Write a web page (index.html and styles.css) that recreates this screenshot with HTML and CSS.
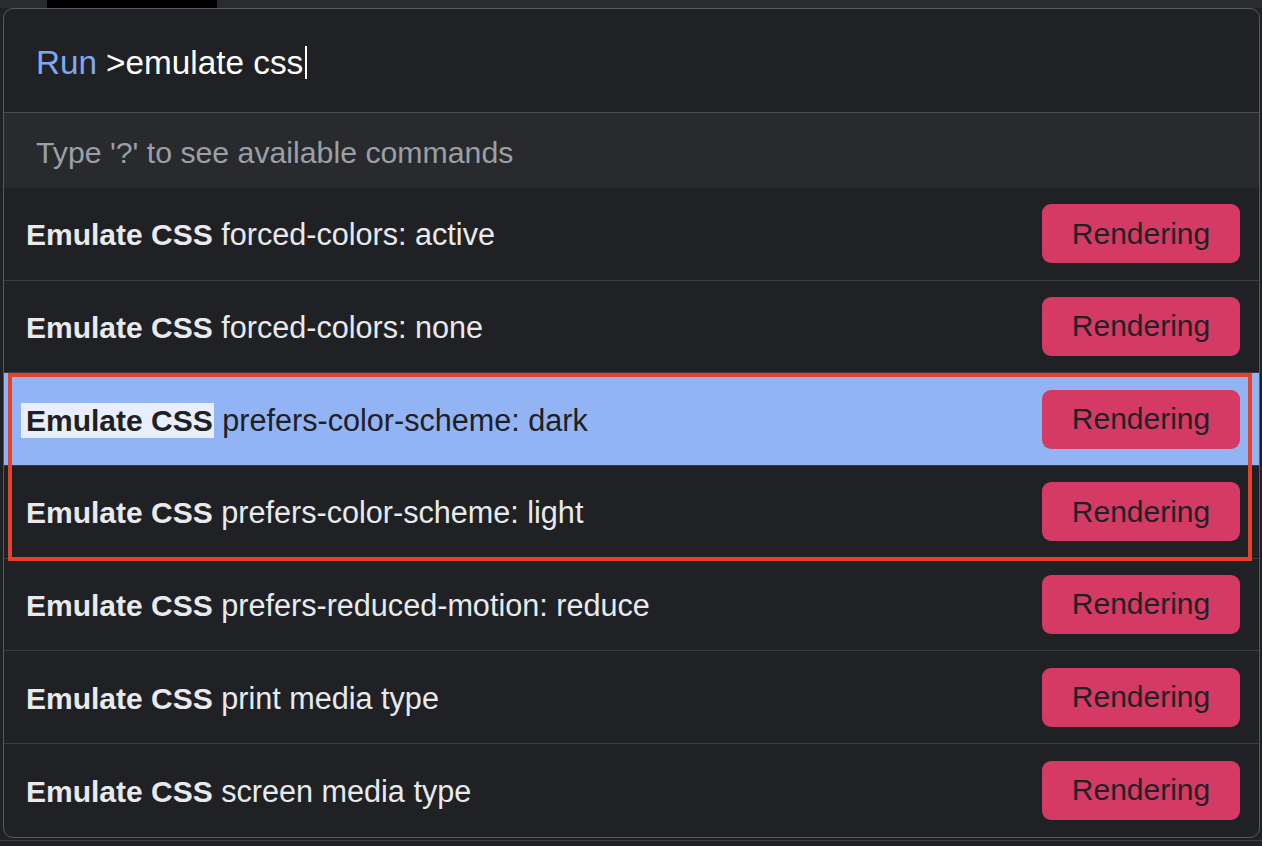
FILE: index.html
```html
<!DOCTYPE html>
<html lang="en">
<head>
<meta charset="utf-8">
<title>Command Menu</title>
<link rel="stylesheet" href="styles.css">
</head>
<body>
  <div class="topstrip"><div class="topstrip-tab"></div></div>
  <div class="panel">
    <div class="input-row">
      <span class="prompt">Run</span>
      <span class="query">&gt;emulate css</span><span class="caret"></span>
    </div>
    <div class="hint">Type '?' to see available commands</div>
    <div class="list">
      <div class="row"><span class="label"><b>Emulate CSS</b> forced-colors: active</span><span class="badge">Rendering</span></div>
      <div class="row"><span class="label"><b>Emulate CSS</b> forced-colors: none</span><span class="badge">Rendering</span></div>
      <div class="row selected"><span class="label"><b class="mark">Emulate CSS</b> prefers-color-scheme: dark</span><span class="badge">Rendering</span></div>
      <div class="row"><span class="label"><b>Emulate CSS</b> prefers-color-scheme: light</span><span class="badge">Rendering</span></div>
      <div class="row"><span class="label"><b>Emulate CSS</b> prefers-reduced-motion: reduce</span><span class="badge">Rendering</span></div>
      <div class="row"><span class="label"><b>Emulate CSS</b> print media type</span><span class="badge">Rendering</span></div>
      <div class="row last"><span class="label"><b>Emulate CSS</b> screen media type</span><span class="badge">Rendering</span></div>
    </div>
  </div>
  <div class="bottomstrip"></div>
  <div class="annotation"></div>
</body>
</html>
```

FILE: styles.css
```css
html, body {
  margin: 0;
  padding: 0;
}
body {
  width: 1262px;
  height: 846px;
  overflow: hidden;
  background: #202124;
  font-family: "Liberation Sans", Arial, Helvetica, sans-serif;
  position: relative;
}
.topstrip {
  height: 8px;
  background: #2a2b2e;
  display: flex;
}
.topstrip-tab {
  margin-left: 47px;
  width: 170px;
  height: 8px;
  background: #000;
}
.panel {
  margin-left: 3px;
  width: 1257px;
  box-sizing: border-box;
  border: 1px solid #55585c;
  border-radius: 10px;
  background: #202124;
  overflow: hidden;
}
.input-row {
  height: 104px;
  box-sizing: border-box;
  border-bottom: 1px solid #494b4f;
  display: flex;
  align-items: center;
  padding: 4px 0 0 32px;
  font-size: 33.3px;
  white-space: pre;
}
.prompt {
  color: #7fa8f0;
  margin-right: 9px;
}
.query {
  color: #ffffff;
}
.caret {
  display: inline-block;
  width: 2px;
  height: 33px;
  background: #ffffff;
  margin-left: 2px;
}
.hint {
  height: 75px;
  box-sizing: border-box;
  background: #292a2d;
  display: flex;
  align-items: center;
  padding: 4px 0 0 32px;
  font-size: 30.25px;
  color: #9aa0a6;
}
.row {
  height: 92.67px;
  box-sizing: border-box;
  border-bottom: 1px solid #3a3c40;
  display: flex;
  align-items: center;
  justify-content: space-between;
  padding: 0 19px 0 22px;
  font-size: 30px;
  color: #e8eaed;
}
.row.last {
  border-bottom: none;
}
.row.selected {
  background: #93b4f4;
  color: #1f2023;
}
.label {
  font-size: 30.6px;
  margin-top: 2px;
}
.label b {
  font-weight: 700;
  font-size: 30px;
}
.mark {
  background: #e8eefc;
  padding: 1px 1px 1px 5px;
  margin-left: -5px;
}
.badge {
  width: 198px;
  height: 59px;
  border-radius: 9px;
  background: #d53a64;
  color: #202124;
  display: flex;
  align-items: center;
  justify-content: center;
  font-size: 30px;
}
.bottomstrip {
  margin-top: 2px;
  height: 8px;
  border-top: 1px solid #3c3e42;
  background: #202124;
}
.annotation {
  position: absolute;
  left: 8px;
  top: 373px;
  width: 1244px;
  height: 188px;
  box-sizing: border-box;
  border: 4px solid #e8412a;
  pointer-events: none;
}
```
